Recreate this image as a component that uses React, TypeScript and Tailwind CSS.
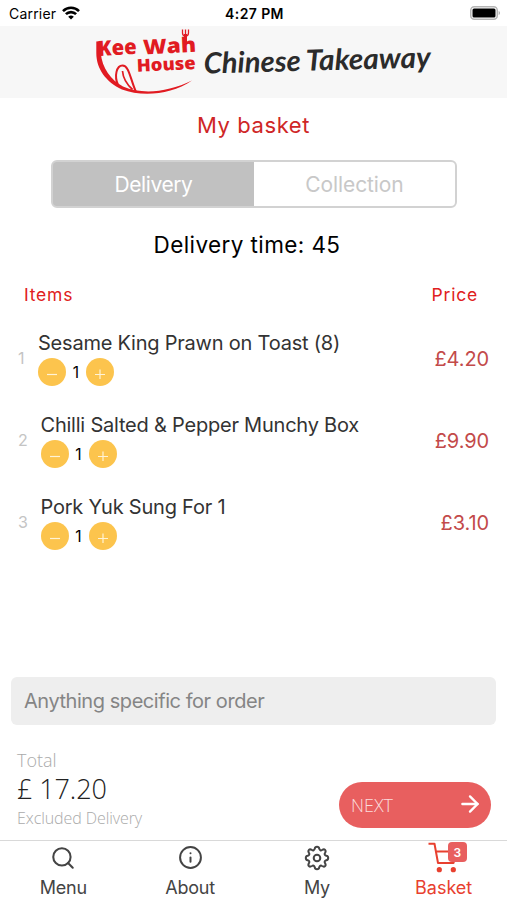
import { useState } from "react";
import { FiArrowRight, FiInfo, FiSearch } from "react-icons/fi";

interface IBasketItem {
  id: number;
  name: string;
  price: string;
  quantity: number;
  indent: string;
}

const items: IBasketItem[] = [
  { id: 1, name: "Sesame King Prawn on Toast (8)", price: "£4.20", quantity: 1, indent: "w-[20px]" },
  { id: 2, name: "Chilli Salted & Pepper Munchy Box", price: "£9.90", quantity: 1, indent: "w-[22.5px]" },
  { id: 3, name: "Pork Yuk Sung For 1", price: "£3.10", quantity: 1, indent: "w-[22.5px]" },
];

function StatusBar() {
  return (
    <div className="h-[26px] pl-[9px] pr-[7px] grid grid-cols-3 items-center text-black">
      <div className="flex items-center gap-[6px]">
        <span className="text-[14px] tracking-[0.2px]">Carrier</span>
        <svg width="18" height="14" viewBox="0 0 18 14" fill="none" stroke="#000" strokeWidth="2.6">
          <path d="M1 5.1a11.4 11.4 0 0 1 16 0" />
          <path d="M3.9 8.2a7.2 7.2 0 0 1 10.2 0" />
          <path d="M9 13.6 6.2 10.8a4 4 0 0 1 5.6 0Z" fill="#000" stroke="none" />
        </svg>
      </div>
      <span className="text-[14px] font-semibold text-center tracking-[0.4px]">4:27 PM</span>
      <div className="flex justify-end">
        <svg width="30" height="14" viewBox="0 0 30 14">
          <rect x="0.75" y="0.75" width="26.5" height="12.5" rx="3.5" fill="#fff" stroke="#b5b5b5" strokeWidth="1.5" />
          <rect x="2.5" y="2.5" width="23" height="9" rx="1.5" fill="#000" />
          <path d="M28.6 5v4c.9-.3 1.4-1 1.4-2s-.5-1.7-1.4-2Z" fill="#b5b5b5" />
        </svg>
      </div>
    </div>
  );
}

function Logo() {
  return (
    <svg width="380" height="70" viewBox="0 0 380 70">
      <g fill="#e11b22" fontFamily="'Open Sans', sans-serif" fontWeight="800">
        <text x="2" y="30" fontSize="21" textLength="39" lengthAdjust="spacingAndGlyphs" transform="rotate(-3 2 30)">Kee</text>
        <text x="47.5" y="28.5" fontSize="20.5" textLength="53" lengthAdjust="spacingAndGlyphs" transform="rotate(-3 47.5 28.5)">Wah</text>
        <text x="41" y="45.7" fontSize="17.5" textLength="59" lengthAdjust="spacingAndGlyphs" transform="rotate(-2.5 41 45.7)">House</text>
      </g>
      <path fill="#e11b22" d="M0.3 15.5 4.8 15v12C6 42 15 54 27 60.5 47 69 72 66 96 54.5 75 69 46 71 26 63.5 10 56 0.3 43 0.3 27Z" />
      <g fill="none" stroke="#e11b22">
        <path d="M22 59c-4-9-1.5-19.500 4.500-19.500C33 39.500 34 52 40 66" strokeWidth="2" />
        <path d="M26.500 45c.5 7 4 13 10 18.500" strokeWidth="1.700" />
        <path d="M86.500 3.500v3.500c0 4 6 4 6 0V3.500M89.500 3.500V9" strokeWidth="1.300" />
        <path d="M89.500 8v8" strokeWidth="3" />
      </g>
      <g fill="#2b2b2b" fontFamily="Lato, sans-serif" fontSize="29" fontWeight="700" fontStyle="italic">
        <text x="108" y="47.500" textLength="97" lengthAdjust="spacingAndGlyphs" transform="rotate(-1.500 108 47.500)">Chinese</text>
        <text x="210" y="44.700" textLength="125" lengthAdjust="spacingAndGlyphs" transform="rotate(-1.500 210 44.700)">Takeaway</text>
      </g>
    </svg>
  );
}

function BasketRow({ item }: { item: IBasketItem }) {
  return (
    <div className="h-[82px] pl-[18px] pr-[18px] flex">
      <span className={`${item.indent} pt-[17px] text-[16px] leading-5 text-[#c4c4c4]`}>{item.id}</span>
      <div className="flex-1">
        <p className="text-[20px] leading-6 tracking-[-0.220px] text-[#333] whitespace-nowrap">{item.name}</p>
        <div className="mt-[3px] flex items-center">
          <button className="size-7 rounded-full bg-[#fcc44d] text-[#fff3d6] flex items-center justify-center">
            <svg className="mt-1" width="10" height="10" stroke="currentColor" strokeWidth="1.2">
              <path d="M0 5.5h10" />
            </svg>
          </button>
          <span className="w-5 text-center text-[15.500px] text-black pt-px">{item.quantity}</span>
          <button className="size-7 rounded-full bg-[#fcc44d] text-[#fff3d6] flex items-center justify-center">
            <svg className="mt-1" width="10" height="10" stroke="currentColor" strokeWidth="1.2">
              <path d="M0 5.5h10M5 .5v10" />
            </svg>
          </button>
        </div>
      </div>
      <span className="pt-[16px] text-[20px] leading-6 tracking-[-0.100px] text-[#c34a4a]">{item.price}</span>
    </div>
  );
}

function GearIcon() {
  return (
    <svg width="26" height="26" viewBox="0 0 26 26" fill="none" stroke="currentColor" strokeWidth="2" strokeLinejoin="round">
      <circle cx="13" cy="13" r="3.3" />
      <path d="M10.8 3.7Q11 1.8 13 1.8T15.2 3.7Q16.2 6.2 18 5Q20 3.8 21.1 4.9T21 8Q19.8 9.8 22.3 10.8Q24.2 11 24.2 13T22.3 15.2Q19.8 16.2 21 18Q22.2 20 21.1 21.1T18 21Q16.2 19.8 15.2 22.3Q15 24.2 13 24.2T10.8 22.3Q9.8 19.8 8 21Q6 22.2 4.9 21.1T5 18Q6.2 16.2 3.7 15.2Q1.8 15 1.8 13T3.7 10.8Q6.2 9.8 5 8Q3.8 6 4.9 4.9T8 5Q9.8 6.2 10.8 3.7Z" />
    </svg>
  );
}

function CartIcon() {
  return (
    <svg width="32" height="32" viewBox="0 0 32 32" fill="none" stroke="#e8402f" strokeWidth="2" strokeLinejoin="round">
      <path d="M.5 1.8h6l3.500 19.200h15.500l3.500-11.500H8" />
      <circle cx="11.3" cy="27.7" r="2.6" fill="#e8402f" stroke="none" />
      <circle cx="25.3" cy="27.7" r="2.6" fill="#e8402f" stroke="none" />
    </svg>
  );
}

export default function App() {
  const [mode, setMode] = useState("delivery");

  const tab = (active: boolean) =>
    active ? "flex-1 pt-px bg-[#c1c1c1] text-white" : "flex-1 pt-px bg-white text-[#c8c8c8]";

  return (
    <div className="w-[507px] h-[900px] bg-white flex flex-col overflow-hidden font-['Inter',sans-serif]">
      <StatusBar />
      <header className="h-[72px] bg-[#f7f7f7] pl-[96px]">
        <Logo />
      </header>

      <h1 className="mt-[11px] h-8 text-center text-[22px] leading-8 tracking-[0.600px] text-[#cf2626]">My basket</h1>

      <div className="mt-[19px] ml-[51px] mr-[50px] h-[48px] flex rounded-[6px] border-2 border-[#d2d2d2] bg-[#d2d2d2] overflow-hidden text-[21px]">
        <button className={`${tab(mode === "delivery")} tracking-[-0.400px]`} onClick={() => setMode("delivery")}>
          Delivery
        </button>
        <button className={`${tab(mode === "collection")} tracking-[-0.100px]`} onClick={() => setMode("collection")}>
          Collection
        </button>
      </div>

      <p className="mt-[21px] pr-[13px] text-center text-[22.500px] leading-8 tracking-[0.400px] text-black">Delivery time: 45</p>

      <div className="mt-[22px] pl-[24px] pr-[29px] h-6 flex justify-between text-[17.500px] leading-6 tracking-[0.800px] text-[#e02020]">
        <span>Items</span>
        <span>Price</span>
      </div>

      <div className="mt-[24px] flex-1">
        {items.map((item) => (
          <BasketRow key={item.id} item={item} />
        ))}
      </div>

      <input
        className="mx-[11px] h-[48px] shrink-0 rounded-[6px] bg-[#eee] px-[13px] text-[20px] tracking-[-0.450px] placeholder:text-[#858585] outline-none"
        placeholder="Anything specific for order"
      />

      <div className="mt-[22px] h-[93px] pl-[17px] pr-[16px] flex justify-between font-['Open_Sans',sans-serif] font-light">
        <div>
          <p className="text-[18px] leading-[26px] text-[#aaa]">Total</p>
          <p className="text-[27px] leading-[32px] tracking-[-0.100px] text-[#222]">£ 17.20</p>
          <p className="text-[16px] leading-[26px] tracking-[-0.080px] text-[#aaa]">Excluded Delivery</p>
        </div>
        <button className="mt-[35px] w-[152px] h-[46px] pl-[12px] pr-[8px] rounded-full bg-[#e85f5f] text-white flex items-center justify-between text-[18px]">
          <span className="text-[#fbdcdc]">NEXT</span>
          <FiArrowRight className="-mt-[2px]" size={26} strokeWidth={2.2} />
        </button>
      </div>

      <nav className="h-[60px] shrink-0 border-t border-[#d9d9d9] grid grid-cols-4 text-[18px] tracking-[-0.250px] text-[#444]">
        <div className="flex flex-col items-center">
          <span className="h-[33px] flex items-center">
            <FiSearch size={26} strokeWidth={1.9} />
          </span>
          <span className="leading-6 mt-[2px]">Menu</span>
        </div>
        <div className="flex flex-col items-center">
          <span className="h-[33px] flex items-center">
            <FiInfo size={25} strokeWidth={1.9} />
          </span>
          <span className="leading-6 mt-[2px]">About</span>
        </div>
        <div className="flex flex-col items-center">
          <span className="h-[33px] flex items-center">
            <GearIcon />
          </span>
          <span className="leading-6 mt-[2px]">My</span>
        </div>
        <div className="flex flex-col items-center text-[#e8402f]">
          <span className="relative h-[34px] pt-px">
            <CartIcon />
            <span className="absolute left-[20px] top-[1px] w-[19px] h-[20px] rounded-[4px] bg-[#e85f5f] text-white text-[12px] font-semibold text-center leading-[21px]">3</span>
          </span>
          <span className="leading-6 mt-px tracking-normal">Basket</span>
        </div>
      </nav>
    </div>
  );
}
